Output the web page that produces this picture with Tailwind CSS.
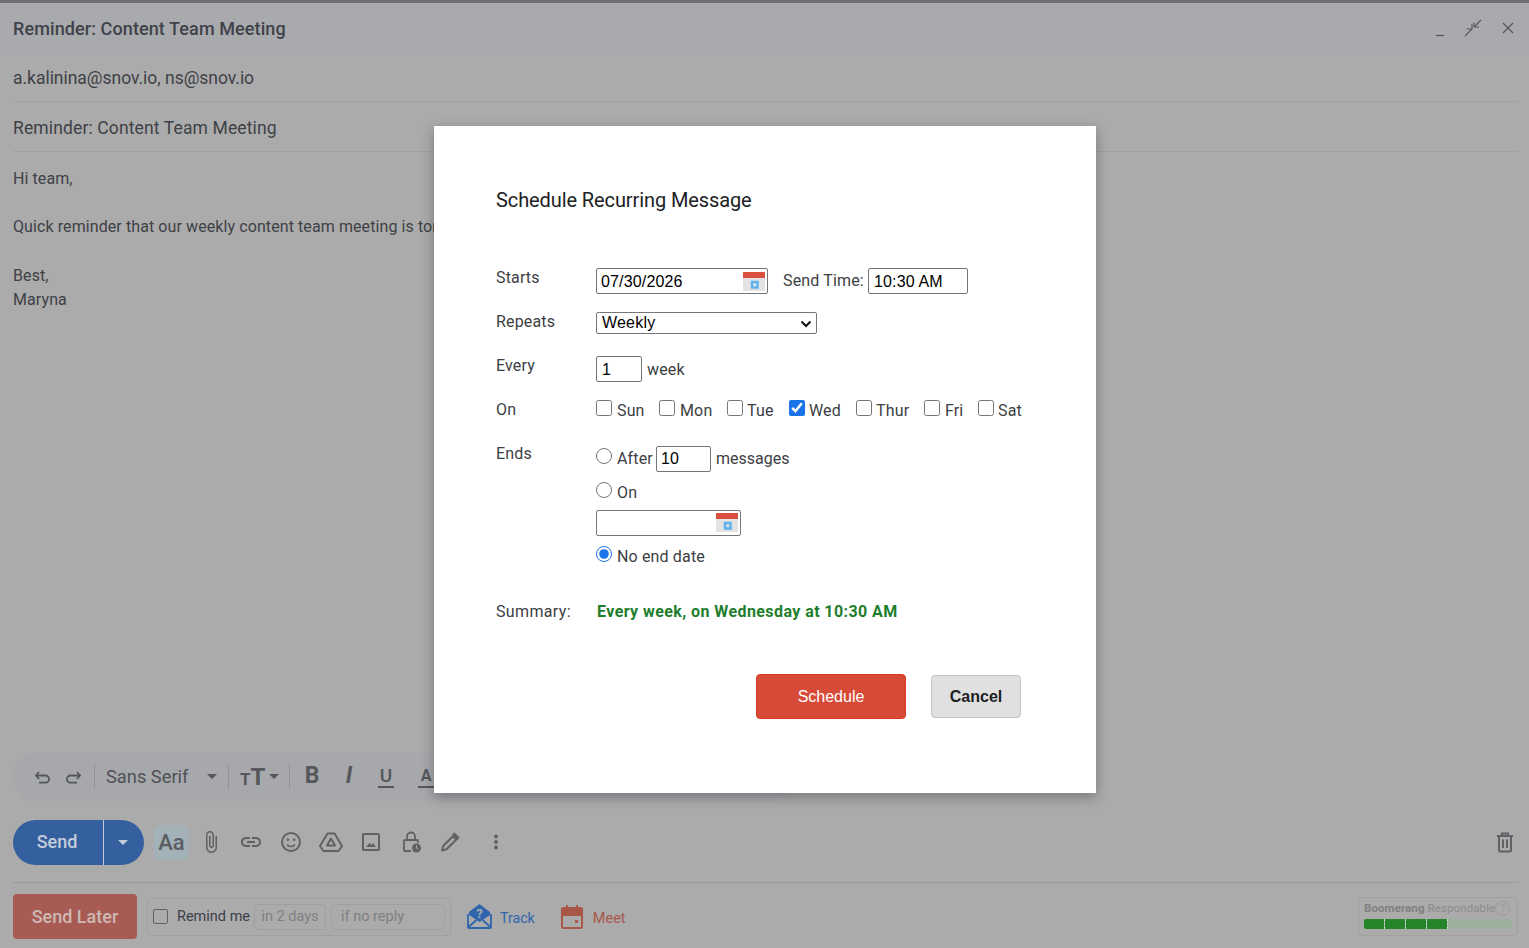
<!DOCTYPE html>
<html lang="en">
<head>
  <meta charset="UTF-8" />
  <title>Schedule Recurring Message</title>
  <script src="https://cdn.jsdelivr.net/npm/@tailwindcss/browser@4"></script>
</head>
<body class="relative h-[948px] overflow-hidden bg-[#ababab] font-['Roboto',sans-serif] text-[#3e4146]">

  <!-- Compose window behind the dialog -->
  <div class="flex h-[948px] flex-col">
    <div class="h-[3px] bg-[#6f6f72]"></div>
    <div class="flex h-[50px] items-center justify-between bg-[#a8aaae] pl-[13px] pr-[15px]">
      <span class="text-[18px] font-medium tracking-[0.1px] text-[#3f4248]">Reminder: Content Team Meeting</span>
      <div class="flex items-center text-[#55575a]">
        <svg class="mt-[6px]" width="16" height="16" viewBox="0 0 16 16"><path d="M3 12.500h8" stroke="currentColor" stroke-width="1.300"/></svg>
        <svg class="ml-[15px]" width="18" height="18" viewBox="0 0 18 18" fill="none" stroke="currentColor" stroke-width="1.100"><path d="M1 17l7-7M10 8l7-7M8 4.500V10H2.500M10 3.500V8h5"/></svg>
        <svg class="ml-[20px]" width="12" height="12" viewBox="0 0 12 12" fill="none" stroke="currentColor" stroke-width="1.200"><path d="M1 1l10 10M11 1L1 11"/></svg>
      </div>
    </div>
    <div class="ml-[13px] mr-[11px] flex h-[49px] items-center border-b border-[#a0a0a0] pt-[3px] text-[17.500px] tracking-[-0.03px]">a.kalinina@snov.io, ns@snov.io</div>
    <div class="ml-[13px] mr-[11px] flex h-[50px] items-center border-b border-[#a0a0a0] pt-[3px] text-[17.500px] tracking-[0.13px]">Reminder: Content Team Meeting</div>
    <div class="ml-[13px] mt-[15px] flex-1 text-[16px] leading-[24.300px] tracking-[0.09px]">
      <p>Hi team,</p>
      <p class="mt-[24px]">Quick reminder that our weekly content team meeting is tomorrow at 10:30 AM.</p>
      <p class="mt-[24px]">Best,</p>
      <p>Maryna</p>
    </div>

    <!-- Format toolbar -->
    <div class="ml-[13px] flex h-[49px] w-[780px] items-center rounded-[24px] bg-[#a6a8ac] pl-[20px] text-[#55575b]">
      <svg width="20" height="20" viewBox="0 0 20 20" fill="none" stroke="currentColor" stroke-width="1.800"><path d="M6 5L3 8.500 6 12M3.500 8.500h9a3.600 3.600 0 010 7.200H6"/></svg>
      <svg class="ml-[10px]" width="20" height="20" viewBox="0 0 20 20" fill="none" stroke="currentColor" stroke-width="1.800"><path d="M14 5l3 3.500-3 3.500M16.500 8.500h-9a3.600 3.600 0 000 7.200H14"/></svg>
      <div class="ml-[11px] h-[25px] w-px bg-[#929497]"></div>
      <span class="ml-[11px] w-[101px] text-[18.300px] text-[#4f5155]">Sans Serif</span>
      <svg width="10" height="6" viewBox="0 0 10 6"><path d="M0 0h10L5 5z" fill="currentColor"/></svg>
      <div class="ml-[11px] h-[25px] w-px bg-[#929497]"></div>
      <span class="ml-[11px] flex w-[27px] items-baseline font-bold leading-none"><span class="text-[17px]">T</span><span class="text-[24px]">T</span></span>
      <svg class="ml-[2px]" width="10" height="6" viewBox="0 0 10 6"><path d="M0 0h10L5 5z" fill="currentColor"/></svg>
      <div class="ml-[10px] h-[25px] w-px bg-[#929497]"></div>
      <span class="ml-[14px] w-[16px] text-center text-[23px] font-bold">B</span>
      <span class="ml-[21px] w-[16px] text-center text-[23px] font-bold italic">I</span>
      <span class="ml-[21px] w-[16px] border-b-2 border-[#55575b] text-center text-[19px] font-medium leading-[20px]">U</span>
      <span class="ml-[24px] w-[16px] border-b-2 border-[#55575b] text-center text-[16px] font-bold leading-[20px]">A</span>
    </div>

    <!-- Send row -->
    <div class="ml-[13px] mr-[13px] mt-[19px] flex h-[45px] items-center text-[#5f6164]">
      <div class="flex h-[45px] w-[131px] overflow-hidden rounded-[23px] bg-[#35609f] text-[#c3cddb]">
        <span class="flex w-[91px] items-center justify-center border-r border-[#c3cddb] pb-[2px] pr-[2px] text-[18px] font-medium">Send</span>
        <span class="flex flex-1 items-center justify-center pr-[2px]"><svg width="10" height="6" viewBox="0 0 10 6"><path d="M0 0h10L5 5z" fill="currentColor"/></svg></span>
      </div>
      <span class="ml-[10px] flex h-[35px] w-[35px] items-center justify-center rounded-[7px] bg-[#a3b2b9] text-[22px] font-medium text-[#5b5d60]">Aa</span>
      <div class="ml-[10px] mb-[2px] flex items-center gap-[16px]">
        <svg width="24" height="24" viewBox="0 0 24 24" fill="currentColor"><path d="M16.500 6v11.500c0 2.210-1.790 4-4 4s-4-1.790-4-4V5c0-1.380 1.120-2.500 2.500-2.500s2.500 1.120 2.500 2.500v10.500c0 .550-.450 1-1 1s-1-.450-1-1V6H10v9.500c0 1.380 1.120 2.500 2.500 2.500s2.500-1.120 2.500-2.500V5c0-2.210-1.790-4-4-4S7 2.790 7 5v12.500c0 3.040 2.460 5.500 5.500 5.500s5.500-2.460 5.500-5.500V6h-1.500z"/></svg>
        <svg width="24" height="24" viewBox="0 0 24 24" fill="currentColor"><path d="M3.900 12c0-1.710 1.390-3.100 3.100-3.100h4V7H7c-2.760 0-5 2.240-5 5s2.240 5 5 5h4v-1.900H7c-1.710 0-3.100-1.390-3.100-3.100zM8 13h8v-2H8v2zm9-6h-4v1.900h4c1.710 0 3.100 1.390 3.100 3.100s-1.390 3.100-3.100 3.100h-4V17h4c2.760 0 5-2.240 5-5s-2.240-5-5-5z"/></svg>
        <svg width="24" height="24" viewBox="0 0 24 24" fill="none" stroke="currentColor" stroke-width="2"><circle cx="12" cy="12" r="9"/><path d="M8 14.500c1 1.500 2.400 2 4 2s3-.5 4-2" stroke-width="1.600"/><circle cx="8.800" cy="9.800" r="1.300" fill="currentColor" stroke="none"/><circle cx="15.200" cy="9.800" r="1.300" fill="currentColor" stroke="none"/></svg>
        <svg width="24" height="24" viewBox="0 0 24 24" fill="none" stroke="currentColor" stroke-width="2" stroke-linejoin="round"><path d="M8.500 3.500h7L23 16l-3.500 5h-15L1 16z"/><path d="M12 8.500L8 15.500h8z"/></svg>
        <svg width="24" height="24" viewBox="0 0 24 24" fill="none" stroke="currentColor" stroke-width="2"><rect x="4" y="4" width="16" height="16" rx="1"/><path d="M7 17l3.500-4 2 2 1.500-2 3 4z" fill="currentColor" stroke="none"/></svg>
        <svg width="24" height="24" viewBox="0 0 24 24" fill="none" stroke="currentColor" stroke-width="1.800"><path d="M8 10V6.500a4 4 0 018 0V10"/><path d="M12 21H6a1 1 0 01-1-1v-9a1 1 0 011-1h12a1 1 0 011 1v2"/><circle cx="17.500" cy="18" r="4.500" fill="currentColor" stroke="none"/><path d="M17.500 15.500V18l1.500 1" stroke="#ababab" stroke-width="1"/></svg>
        <svg class="-ml-[1px]" width="24" height="24" viewBox="0 0 24 24" fill="none" stroke="currentColor" stroke-linejoin="round"><path d="M4 20.500l1.200-4.500L15 6.200l3.300 3.300L8.500 19.300z" stroke-width="2"/><path d="M14.500 4.500l2-1.500 4.500 4.500-1.500 2.200z" fill="currentColor" stroke-width="1"/></svg>
      </div>
      <svg class="ml-[22px] mb-[2px]" width="24" height="24" viewBox="0 0 24 24" fill="currentColor"><circle cx="12" cy="6.500" r="1.900"/><circle cx="12" cy="12" r="1.900"/><circle cx="12" cy="17.500" r="1.900"/></svg>
      <svg class="ml-auto mb-[2px]" width="22" height="22" viewBox="0 0 22 22" fill="none" stroke="currentColor" stroke-width="2"><path d="M3 5h16M8 5V2.500h6V5M5 5v14.500a1 1 0 001 1h10a1 1 0 001-1V5"/><path d="M9 8.500v8.500M13 8.500v8.500"/></svg>
    </div>

    <div class="ml-[13px] mr-[11px] mt-[17px] h-px bg-[#999a9b]"></div>

    <!-- Bottom bar -->
    <div class="ml-[13px] mr-[11px] mt-[11px] mb-[9px] flex h-[45px] items-center">
      <span class="flex h-[45px] w-[124px] items-center justify-center rounded-[4px] bg-[#a85b53] text-[18px] font-medium text-[#cdb8b3]">Send Later</span>
      <div class="ml-[10px] flex h-[38px] w-[304px] items-center rounded-[4px] border border-[#a0a0a0] pl-[5px]">
        <input type="checkbox" class="h-[15px] w-[15px] appearance-none rounded-[2px] border border-[#5f6164]" />
        <span class="ml-[9px] w-[77px] text-[14.500px] text-[#3c4049]">Remind me</span>
        <span class="flex h-[26px] w-[72px] items-center justify-center rounded-[4px] border border-[#a0a0a0] text-[14.500px] text-[#808080]">in 2 days</span>
        <span class="ml-[5px] flex h-[26px] w-[114px] items-center rounded-[4px] border border-[#a0a0a0] pl-[9px] text-[14.500px] text-[#808080]">if no reply</span>
      </div>
      <svg class="ml-[15px]" width="27" height="27" viewBox="0 0 27 27" fill="#2f65ad"><path d="M13.500 1L24 9v3L13.500 19 3 12V9z"/><path d="M2 11v13a1 1 0 001 1h21a1 1 0 001-1V11M2.500 24l8-7M24.500 24l-8-7" fill="none" stroke="#2f65ad" stroke-width="1.800"/><text x="13.500" y="15" text-anchor="middle" font-size="13" font-weight="700" font-family="Roboto" fill="#ababab">?</text></svg>
      <span class="ml-[7px] mt-[5px] text-[14.200px] text-[#2f65ad]">Track</span>
      <svg class="ml-[25px]" width="24" height="25" viewBox="0 0 24 25" fill="none" stroke="#a85748" stroke-width="2"><rect x="2" y="4" width="20" height="20" rx="1.500"/><path d="M2 5h20v6H2z" fill="#a85748"/><path d="M7 1v5M17 1v5"/><rect x="15" y="16" width="3" height="3" fill="#a85748" stroke="none"/></svg>
      <span class="ml-[9px] mt-[5px] text-[14.500px] text-[#a85748]">Meet</span>
      <div class="ml-auto w-[160px] rounded-[5px] border border-[#a0a0a0] px-[5px] pt-[3px] pb-[6px]">
        <div class="flex items-center whitespace-nowrap text-[11.500px] leading-[15px] tracking-[0.1px] text-[#8a8a8a]"><b class="font-bold text-[#808080]">Boomerang</b>&nbsp;Respondable<span class="flex h-[15px] w-[15px] shrink-0 items-center justify-center rounded-full border border-[#9a9a9a] text-[10px] text-[#9a9a9a]">?</span></div>
        <div class="mt-[3px] flex h-[10px] overflow-hidden rounded-[2px] bg-[#9cae9c]">
          <span class="w-[21px] border-r border-dashed border-[#cfd6cf] bg-[#25852b]"></span>
          <span class="w-[21px] border-r border-dashed border-[#cfd6cf] bg-[#25852b]"></span>
          <span class="w-[21px] border-r border-dashed border-[#cfd6cf] bg-[#25852b]"></span>
          <span class="w-[21px] border-r border-dashed border-[#cfd6cf] bg-[#25852b]"></span>
        </div>
      </div>
    </div>
  </div>

  <!-- Recurring message dialog -->
  <div class="absolute left-[434px] top-[126px] h-[667px] w-[662px] bg-white pl-[62px] pt-[60px] text-[16px] tracking-[0.15px] text-[#3c4043] shadow-[0_4px_12px_rgba(0,0,0,0.3)]">
    <h2 class="text-[20px] leading-[28px] tracking-[-0.1px] text-[#202124]">Schedule Recurring Message</h2>

    <div class="mt-[54px] flex h-[44px] items-start">
      <span class="w-[100px] leading-5">Starts</span>
      <div class="relative flex h-[26px] w-[172px] items-center rounded-[2px] border border-[#767676] pl-[4px] pt-[1px] font-['Liberation_Sans',sans-serif] text-black">07/30/2026
        <svg class="absolute right-[2px] top-[3px]" width="22" height="19" viewBox="0 0 22 19"><rect width="22" height="19" fill="#e3e3e3"/><rect width="22" height="6" fill="#d9503f"/><rect x="9" y="10" width="5.500" height="5.500" fill="none" stroke="#5fb2ef" stroke-width="2.500"/></svg>
      </div>
      <span class="ml-[15px] mt-[3px] w-[81px] whitespace-nowrap leading-5">Send Time:</span>
      <span class="ml-[4px] flex h-[26px] w-[100px] items-center rounded-[2px] border border-[#767676] pl-[5px] pt-[1px] font-['Liberation_Sans',sans-serif] text-black">10:30 AM</span>
    </div>

    <div class="flex h-[44px] items-start">
      <span class="w-[100px] leading-5">Repeats</span>
      <div class="relative h-[22px] w-[221px]">
        <select class="block h-[22px] w-full appearance-none rounded-[2px] border border-[#767676] bg-white pl-[5px] font-['Liberation_Sans',sans-serif] text-[16px] leading-none tracking-[0.2px] text-black">
          <option>Weekly</option>
        </select>
        <svg class="absolute right-[5px] top-[8px]" width="12" height="8" viewBox="0 0 12 8" fill="none" stroke="#111" stroke-width="2"><path d="M1.500 1.500L6 6l4.500-4.500"/></svg>
      </div>
    </div>

    <div class="flex h-[44px] items-start">
      <span class="w-[100px] leading-5">Every</span>
      <span class="flex h-[26px] w-[46px] items-center rounded-[2px] border border-[#767676] pl-[5px] pt-[1px] font-['Liberation_Sans',sans-serif] text-black">1</span>
      <span class="ml-[5px] mt-[4px] leading-5">week</span>
    </div>

    <div class="flex h-[44px] items-start">
      <span class="w-[100px] leading-5">On</span>
      <label class="flex w-[63px] items-start"><input type="checkbox" class="h-4 w-4" /><span class="ml-[5px] mt-[1px] leading-5">Sun</span></label>
      <label class="flex w-[68px] items-start"><input type="checkbox" class="h-4 w-4" /><span class="ml-[5px] mt-[1px] leading-5">Mon</span></label>
      <label class="flex w-[62px] items-start"><input type="checkbox" class="h-4 w-4" /><span class="ml-[4px] mt-[1px] leading-5">Tue</span></label>
      <label class="flex w-[67px] items-start"><input type="checkbox" checked class="h-4 w-4 accent-[#1a73e8]" /><span class="ml-[4px] mt-[1px] leading-5">Wed</span></label>
      <label class="flex w-[68px] items-start"><input type="checkbox" class="h-4 w-4" /><span class="ml-[4px] mt-[1px] leading-5">Thur</span></label>
      <label class="flex w-[54px] items-start"><input type="checkbox" class="h-4 w-4" /><span class="ml-[5px] mt-[1px] leading-5">Fri</span></label>
      <label class="flex items-start"><input type="checkbox" class="h-4 w-4" /><span class="ml-[4px] mt-[1px] leading-5">Sat</span></label>
    </div>

    <div class="flex items-start">
      <span class="w-[100px] leading-5">Ends</span>
      <div class="flex flex-col">
        <div class="mt-[2px] flex h-[26px] items-start">
          <input type="radio" name="ends" class="mt-[2px] h-4 w-4" />
          <span class="ml-[5px] mt-[3px] w-[36px] leading-5">After</span>
          <span class="ml-[3px] flex h-[26px] w-[55px] items-center rounded-[2px] border border-[#767676] pl-[4px] font-['Liberation_Sans',sans-serif] text-black">10</span>
          <span class="ml-[5px] mt-[3px] leading-5 tracking-normal">messages</span>
        </div>
        <div class="mt-[10px] flex h-[22px] items-start">
          <input type="radio" name="ends" class="h-4 w-4" />
          <span class="ml-[5px] mt-[1px] leading-5">On</span>
        </div>
        <div class="relative mt-[6px] h-[26px] w-[145px] rounded-[2px] border border-[#767676]">
          <svg class="absolute right-[2px] top-[2px]" width="22" height="19" viewBox="0 0 22 19"><rect width="22" height="19" fill="#e3e3e3"/><rect width="22" height="6" fill="#d9503f"/><rect x="9" y="10" width="5.500" height="5.500" fill="none" stroke="#5fb2ef" stroke-width="2.500"/></svg>
        </div>
        <div class="mt-[10px] flex h-[22px] items-start">
          <input type="radio" name="ends" checked class="h-4 w-4 accent-[#1a73e8]" />
          <span class="ml-[5px] mt-[1px] leading-5">No end date</span>
        </div>
      </div>
    </div>

    <div class="mt-[34px] flex items-start">
      <span class="w-[100px] leading-5 tracking-[0.35px]">Summary:</span>
      <span class="ml-[1px] font-bold leading-5 tracking-[0.42px] text-[#1e7e2c]">Every week, on Wednesday at 10:30 AM</span>
    </div>

    <div class="ml-[260px] mt-[52px] flex items-center font-['Liberation_Sans',sans-serif] tracking-normal">
      <button class="h-[45px] w-[150px] rounded-[4px] border border-[#d93a25] bg-[#d84a38] text-white">Schedule</button>
      <button class="ml-[25px] h-[43px] w-[90px] rounded-[4px] border border-[#c4c4c4] bg-[#e0e0e0] font-bold text-[#202124]">Cancel</button>
    </div>
  </div>
</body>
</html>
